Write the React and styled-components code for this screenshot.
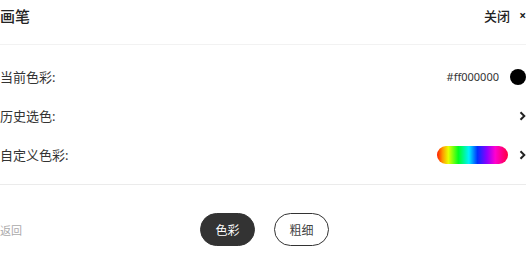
import React from 'react';
import styled, { createGlobalStyle } from 'styled-components';

const GlobalStyle = createGlobalStyle`
  body {
    margin: 0;
    background: #fff;
    font-family: "Noto Sans", "Noto Sans CJK SC", sans-serif;
    color: #333;
  }
`;

// Styling Panel

const Panel = styled.div`
  width: 529px;
  padding-right: 3px;
  box-sizing: border-box;
`;

// Styling Header

const Header = styled.div`
  display: flex;
  justify-content: space-between;
  align-items: center;
  height: 30px;
  padding-bottom: 14px;
  border-bottom: 1px solid #f2f2f2;
`;

const Title = styled.div`
  font-size: 15px;
  font-weight: 500;
  color: #222;
`;

const Close = styled.div`
  display: flex;
  align-items: center;
  gap: 9px;
  font-size: 13px;
  font-weight: 500;
  color: #222;
  cursor: pointer;
`;

const CloseMark = styled.span`
  font-size: 12px;
  font-weight: 700;
`;

// Styling List

const List = styled.div`
  padding: 12px 0 10px;
  border-bottom: 1px solid #ebebeb;
`;

const Row = styled.div`
  display: flex;
  justify-content: space-between;
  align-items: center;
  height: 39px;
`;

const Label = styled.div`
  font-size: 13px;
  color: #333;
`;

const Right = styled.div`
  display: flex;
  align-items: center;
  gap: ${(p) => p.gap || 10}px;
`;

const Hex = styled.span`
  font-size: 11px;
  color: #333;
`;

const Dot = styled.span`
  width: 16px;
  height: 16px;
  border-radius: 50%;
  background: ${(p) => p.color};
`;

const Spectrum = styled.span`
  width: 71px;
  height: 18px;
  border-radius: 9px;
  background: linear-gradient(
    to right,
    #ff1a00 0%,
    #ff9a00 8%,
    #e8ff00 16%,
    #00ff20 30%,
    #00f0ff 45%,
    #0030ff 57%,
    #8a00ff 70%,
    #ff00d0 82%,
    #ff0040 100%
  );
`;

// Styling Footer

const Footer = styled.div`
  display: grid;
  grid-template-columns: 1fr auto 1fr;
  align-items: center;
  padding-top: 28px;
`;

const Back = styled.div`
  font-size: 11px;
  color: #aaa;
`;

const Tabs = styled.div`
  display: flex;
  gap: 19px;
  margin-left: 3px;
`;

const Tab = styled.button`
  width: 55px;
  height: 33px;
  border-radius: 17px;
  box-sizing: border-box;
  border: 1.5px solid #333;
  background: ${(p) => (p.active ? '#333' : '#fff')};
  color: ${(p) => (p.active ? '#fff' : '#444')};
  font-family: inherit;
  font-size: 12px;
  padding: 0;
  cursor: pointer;
`;

const Chevron = () => (
  <svg width="7" height="10" viewBox="0 0 7 10">
    <path d="M1.5 1.2 L5.3 5 L1.5 8.8" fill="none" stroke="#222" strokeWidth="2" />
  </svg>
);

const App = () => {
  return (
    <Panel>
      <GlobalStyle />
      <Header>
        <Title>画笔</Title>
        <Close>
          关闭 <CloseMark>×</CloseMark>
        </Close>
      </Header>

      <List>
        <Row>
          <Label>当前色彩:</Label>
          <Right gap={11}>
            <Hex>#ff000000</Hex>
            <Dot color="#000" />
          </Right>
        </Row>
        <Row>
          <Label>历史选色:</Label>
          <Right>
            <Chevron />
          </Right>
        </Row>
        <Row>
          <Label>自定义色彩:</Label>
          <Right gap={11}>
            <Spectrum />
            <Chevron />
          </Right>
        </Row>
      </List>

      <Footer>
        <Back>返回</Back>
        <Tabs>
          <Tab active>色彩</Tab>
          <Tab>粗细</Tab>
        </Tabs>
        <div />
      </Footer>
    </Panel>
  );
};

export default App;
